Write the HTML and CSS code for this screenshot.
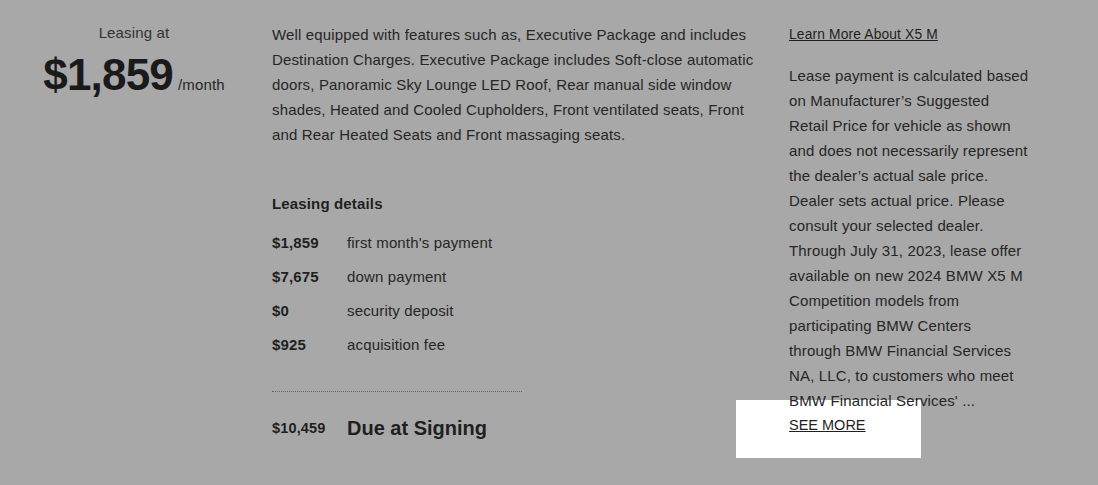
FILE: index.html
```html
<!DOCTYPE html>
<html>
<head>
<meta charset="utf-8">
<link rel="stylesheet" href="styles.css">
</head>
<body>
<div class="page">
  <section class="price-col">
    <div class="leasing-at">Leasing at</div>
    <div class="price"><span class="amount">$1,859</span><span class="per">/month</span></div>
  </section>
  <section class="main-col">
    <p class="desc">Well equipped with features such as, Executive Package and includes Destination Charges. Executive Package includes Soft-close automatic doors, Panoramic Sky Lounge LED Roof, Rear manual side window shades, Heated and Cooled Cupholders, Front ventilated seats, Front and Rear Heated Seats and Front massaging seats.</p>
    <h3 class="details-title">Leasing details</h3>
    <div class="details">
      <div class="row"><span class="val">$1,859</span><span class="lbl">first month's payment</span></div>
      <div class="row"><span class="val">$7,675</span><span class="lbl">down payment</span></div>
      <div class="row"><span class="val">$0</span><span class="lbl">security deposit</span></div>
      <div class="row"><span class="val">$925</span><span class="lbl">acquisition fee</span></div>
    </div>
    <div class="due">
      <span class="due-val">$10,459</span><span class="due-lbl">Due at Signing</span>
    </div>
  </section>
  <section class="side-col">
    <a class="learn" href="#">Learn More About X5 M</a>
    <p class="disclaimer">Lease payment is calculated based on Manufacturer’s Suggested Retail Price for vehicle as shown and does not necessarily represent the dealer’s actual sale price. Dealer sets actual price. Please consult your selected dealer. Through July 31, 2023, lease offer available on new 2024 BMW X5 M Competition models from participating BMW Centers<br>through BMW Financial Services NA, LLC, to customers who meet BMW Financial Services' ...</p>
    <div class="see-more-wrap">
      <div class="highlight"></div>
      <a class="see-more" href="#">SEE MORE</a>
    </div>
  </section>
</div>
</body>
</html>
```

FILE: styles.css
```css
* { box-sizing: border-box; }
html, body {
  margin: 0;
  padding: 0;
  background: #a8a8a8;
  height: 100%;
}
body {
  font-family: "Liberation Sans", Arial, Helvetica, sans-serif;
  color: #262626;
  font-size: 15px;
  line-height: 25px;
  letter-spacing: 0.15px;
  overflow: hidden;
}
.page {
  display: flex;
  padding-top: 22px;
}
.price-col {
  width: 268px;
  flex: none;
  text-align: center;
}
.leasing-at {
  color: #333;
  font-size: 15px;
  line-height: 22px;
}
.price {
  margin-top: 6px;
  display: flex;
  align-items: baseline;
  justify-content: center;
}
.amount {
  font-weight: 700;
  font-size: 44px;
  line-height: 50px;
  letter-spacing: -0.8px;
  color: #1a1a1a;
}
.per {
  font-size: 15px;
  margin-left: 5px;
  color: #262626;
}
.main-col {
  width: 490px;
  flex: none;
  margin-left: 4px;
}
.desc {
  margin: 0;
}
.details-title {
  margin: 44px 0 0;
  font-size: 15px;
  line-height: 25px;
  font-weight: 700;
  color: #1f1f1f;
}
.details {
  margin-top: 10px;
}
.row {
  display: flex;
  height: 33.8px;
  align-items: center;
}
.val {
  width: 75px;
  font-weight: 700;
  font-size: 15px;
  color: #1f1f1f;
}
.lbl {
  font-size: 15px;
}
.due {
  margin-top: 30px;
  width: 250px;
  border-top: 1px dotted #666;
  display: flex;
  align-items: center;
  height: 71px;
  padding-top: 2px;
}
.due-val {
  width: 75px;
  font-weight: 700;
  font-size: 14.5px;
  color: #1f1f1f;
}
.due-lbl {
  font-weight: 700;
  font-size: 20px;
  letter-spacing: 0;
  color: #1f1f1f;
}
.side-col {
  margin-left: 27px;
  width: 241px;
  flex: none;
}
.learn {
  display: block;
  font-size: 13.8px;
  line-height: 26px;
  color: #1f1f1f;
  text-decoration: underline;
}
.disclaimer {
  position: relative;
  z-index: 1;
  margin: 15px 0 0;
}
.see-more-wrap {
  position: relative;
}
.highlight {
  position: absolute;
  left: -53px;
  top: -13px;
  width: 185px;
  height: 58px;
  background: #ffffff;
}
.see-more {
  position: relative;
  z-index: 1;
  display: block;
  color: #1f1f1f;
  text-decoration: underline;
  font-size: 14.5px;
  letter-spacing: 0;
  line-height: 25px;
}
```
